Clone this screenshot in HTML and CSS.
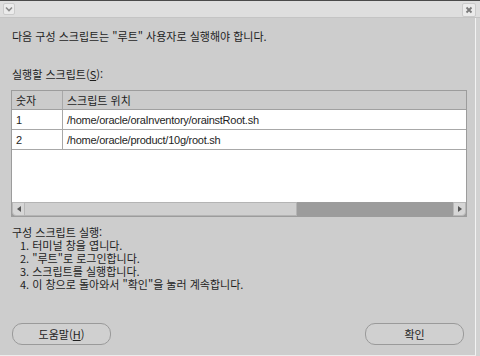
FILE: index.html
```html
<!DOCTYPE html>
<html lang="ko">
<head>
    <meta charset="UTF-8">
    <title>구성 스크립트 실행</title>
    <link rel="stylesheet" href="styles.css">
</head>
<body>
    <div class="window">
        <div class="titlebar">
            <div class="tb-button menu">
                <svg width="8" height="6" viewBox="0 0 8 6"><path d="M1 1.5 L4 4.5 L7 1.5" fill="none" stroke="#8a8a8a" stroke-width="1.6"/></svg>
            </div>
            <div class="tb-button close">
                <svg width="8" height="8" viewBox="0 0 8 8"><path d="M1.5 1.5 L6.5 6.5 M6.5 1.5 L1.5 6.5" fill="none" stroke="#7a7a7a" stroke-width="1.8"/></svg>
            </div>
        </div>
        <div class="content">
            <p class="message">다음 구성 스크립트는 "루트" 사용자로 실행해야 합니다.</p>
            <p class="label">실행할 스크립트(<u>S</u>):</p>
            <div class="table-box">
                <table class="scripts">
                    <thead>
                        <tr><th class="col-num">숫자</th><th>스크립트 위치</th></tr>
                    </thead>
                    <tbody>
                        <tr><td class="col-num">1</td><td>/home/oracle/oraInventory/orainstRoot.sh</td></tr>
                        <tr><td class="col-num">2</td><td>/home/oracle/product/10g/root.sh</td></tr>
                    </tbody>
                </table>
                <div class="filler"></div>
                <div class="hscroll">
                    <div class="arrow left">
                        <svg width="4" height="6" viewBox="0 0 4 6"><path d="M4 0 L0 3 L4 6 Z" fill="#555"/></svg>
                    </div>
                    <div class="track"><div class="thumb"></div></div>
                    <div class="arrow right">
                        <svg width="4" height="6" viewBox="0 0 4 6"><path d="M0 0 L4 3 L0 6 Z" fill="#555"/></svg>
                    </div>
                </div>
            </div>
            <div class="steps">
                <p>구성 스크립트 실행:</p>
                <ol>
                    <li>1. 터미널 창을 엽니다.</li>
                    <li>2. "루트"로 로그인합니다.</li>
                    <li>3. 스크립트를 실행합니다.</li>
                    <li>4. 이 창으로 돌아와서 "확인"을 눌러 계속합니다.</li>
                </ol>
            </div>
            <div class="buttons">
                <button class="btn">도움말(<u>H</u>)</button>
                <button class="btn">확인</button>
            </div>
        </div>
    </div>
</body>
</html>
```

FILE: styles.css
```css
body {
    margin: 0;
    padding: 0;
    font-family: "Noto Sans CJK KR", "Liberation Sans", sans-serif;
    font-size: 11px;
    color: #1e1e1e;
    background-color: #cdcdcd;
}
.window {
    width: 480px;
    height: 356px;
    display: flex;
    flex-direction: column;
    background-color: #d2d2d2;
    box-sizing: border-box;
    border-top: 1px solid #4a4a4a;
}
.titlebar {
    height: 17px;
    display: flex;
    justify-content: space-between;
    align-items: flex-start;
    padding: 2px 4px 0 3px;
    box-sizing: border-box;
    background-color: #dedede;
    border-bottom: 1px solid #c4c4c4;
}
.tb-button {
    width: 12px;
    height: 12px;
    display: flex;
    align-items: center;
    justify-content: center;
    background-color: #ebebeb;
    border: 1px solid #cbcbcb;
    border-radius: 2px;
    box-sizing: border-box;
}
.tb-button.close {
    width: 14px;
    height: 14px;
}
.content {
    flex: 1;
    display: flex;
    flex-direction: column;
    margin-right: 4px;
    padding: 0 8px 0 11px;
    background-color: #cdcdcd;
    border-right: 1px solid #f2f2f2;
    border-bottom: 1px solid #ededed;
}
.content p {
    margin: 0;
}
.message {
    margin-top: 11px !important;
    line-height: 14px;
    padding-left: 1px;
}
.label {
    margin-top: 24px !important;
    line-height: 14px;
    padding-left: 1px;
}
.table-box {
    margin-top: 9px;
    height: 127px;
    display: flex;
    flex-direction: column;
    border: 1px solid #9c9c9c;
    box-sizing: border-box;
    background-color: #fff;
}
.scripts {
    width: 100%;
    border-collapse: collapse;
}
.scripts th,
.scripts td {
    text-align: left;
    font-weight: normal;
    padding: 0 0 0 4px;
    border-bottom: 1px solid #a8a8a8;
    white-space: nowrap;
}
.scripts th {
    height: 18px;
    background-color: #cbcbcb;
    border-bottom-color: #a0a0a0;
    line-height: 14px;
}
.scripts td {
    height: 19px;
    font-family: "Liberation Sans", sans-serif;
    font-size: 11px;
    letter-spacing: -0.25px;
    line-height: 14px;
}
.scripts .col-num {
    width: 46px;
    border-right: 1px solid #a8a8a8;
}
.filler {
    flex: 1;
}
.hscroll {
    height: 14px;
    display: flex;
    background-color: #9c9c9c;
}
.arrow {
    width: 13px;
    display: flex;
    align-items: center;
    justify-content: center;
    background-color: #d6d6d6;
    border: 1px solid #b8b8b8;
    box-sizing: border-box;
}
.arrow.left {
    border-bottom-left-radius: 4px;
}
.arrow.right {
    border-bottom-right-radius: 4px;
}
.track {
    flex: 1;
    display: flex;
}
.thumb {
    width: 272px;
    background-color: #cfcfcf;
    border: 1px solid #b4b4b4;
    border-left: none;
    box-sizing: border-box;
}
.steps {
    margin-top: 9px;
    line-height: 13px;
    padding-left: 1px;
}
.steps ol {
    list-style: none;
    margin: 0;
    padding: 0 0 0 8px;
}
.buttons {
    margin-top: 32px;
    display: flex;
    justify-content: space-between;
    padding: 0 3px 0 1px;
}
.btn {
    width: 99px;
    height: 22px;
    font-family: "Noto Sans CJK KR", "Liberation Sans", sans-serif;
    font-size: 11px;
    color: #1e1e1e;
    background-color: #d0d0d0;
    border: 1px solid #9a9a9a;
    border-radius: 10px;
    padding: 0;
}
```
